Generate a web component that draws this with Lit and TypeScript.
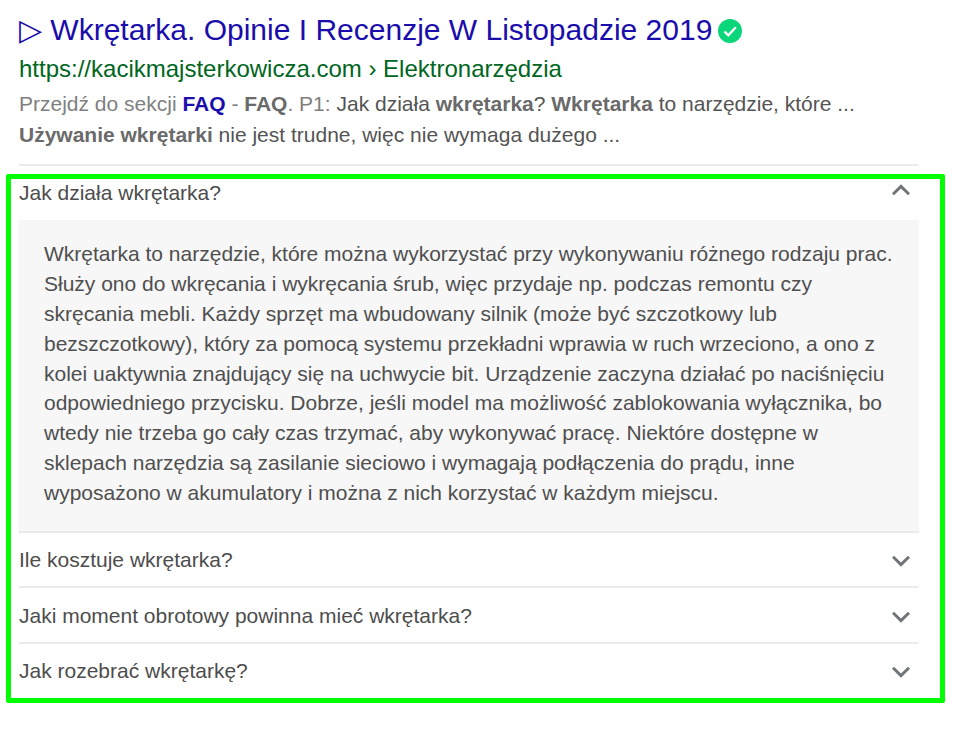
import { LitElement, html, css } from "lit";
import { customElement } from "lit/decorators.js";

const chev = (up: boolean) => html`<svg class="chev" viewBox="0 0 20 12" width="20" height="12"><path d=${up ? "M2 10.2 10 2.4l8 7.8" : "M2 1.8 10 9.6l8-7.8"} fill="none" stroke="#70757a" stroke-width="3"/></svg>`;

@customElement("app-root")
export class AppRoot extends LitElement {
  static styles = css`
    :host { display: block; position: relative; width: 964px; height: 731px; background: #fff; font-family: "Liberation Sans", Arial, sans-serif; overflow: hidden; }
    .wrap { width: 900px; margin-left: 19px; padding-top: 10px; display: flex; flex-direction: column; }
    .title { display: flex; align-items: center; gap: 6px; height: 38px; font-size: 30px; color: #1a0dab; white-space: nowrap; }
    .badge { margin-top: 4px; }
    .url { font-size: 24px; line-height: 24px; margin-top: 9px; color: #006621; white-space: nowrap; }
    .snippet { font-size: 21px; line-height: 31px; margin-top: 7px; color: #545454; }
    .snippet b.g { color: #6a6a6a; }
    .snippet b.b { color: #1a0dab; }
    .snippet .m { color: #808080; }
    .first { border-top: 2px solid #ebebeb; margin-top: 14px; }
    .row { display: flex; justify-content: space-between; align-items: center; font-size: 21px; color: #4d4d4d; height: 55.5px; box-sizing: border-box; padding: 2px 8px 0 0; border-top: 2px solid #ebebeb; }
    .row .chev { margin-top: 2px; }
    .row.open { border-top: 0; height: 54px; padding: 0 8px 1px 0; }
    .row.open .chev { margin: 0 0 6px; }
    .panel { background: #f7f7f7; padding: 19px 24px 0 25px; font-size: 21px; line-height: 29.875px; color: #4f4f4f; height: 310.7px; box-sizing: border-box; }
    .frame { position: absolute; left: 6px; top: 174px; width: 939px; height: 529px; box-sizing: border-box; border: 5px solid #00ff00; border-radius: 2px; pointer-events: none; }
  `;
  render() {
    return html`
      <div class="wrap">
        <div class="title"><span>▷ Wkrętarka. Opinie I Recenzje W Listopadzie 2019</span>
          <svg class="badge" width="24" height="24" viewBox="0 0 24 24"><circle cx="12" cy="12" r="12" fill="#0bd67a"/><path d="M6.5 12.5l3.8 3.8 7.5-8" fill="none" stroke="#fff" stroke-width="2.4"/></svg>
        </div>
        <div class="url">https://kacikmajsterkowicza.com › Elektronarzędzia</div>
        <div class="snippet"><span class="m">Przejdź do sekcji</span> <b class="b">FAQ</b> <span class="m">-</span> <b class="g">FAQ</b><span class="m">. P1:</span> Jak działa <b class="g">wkrętarka</b>? <b class="g">Wkrętarka</b> to narzędzie, które ...<br><b class="g">Używanie wkrętarki</b> nie jest trudne, więc nie wymaga dużego ...</div>
        <div class="first"></div>
        <div class="row open"><span>Jak działa wkrętarka?</span>${chev(true)}</div>
        <div class="panel">Wkrętarka to narzędzie, które można wykorzystać przy wykonywaniu różnego rodzaju prac. Służy ono do wkręcania i wykręcania śrub, więc przydaje np. podczas remontu czy skręcania mebli. Każdy sprzęt ma wbudowany silnik (może być szczotkowy lub bezszczotkowy), który za pomocą systemu przekładni wprawia w ruch wrzeciono, a ono z kolei uaktywnia znajdujący się na uchwycie bit. Urządzenie zaczyna działać po naciśnięciu odpowiedniego przycisku. Dobrze, jeśli model ma możliwość zablokowania wyłącznika, bo wtedy nie trzeba go cały czas trzymać, aby wykonywać pracę. Niektóre dostępne w sklepach narzędzia są zasilanie sieciowo i wymagają podłączenia do prądu, inne wyposażono w akumulatory i można z nich korzystać w każdym miejscu.</div>
        <div class="row"><span>Ile kosztuje wkrętarka?</span>${chev(false)}</div>
        <div class="row"><span>Jaki moment obrotowy powinna mieć wkrętarka?</span>${chev(false)}</div>
        <div class="row"><span>Jak rozebrać wkrętarkę?</span>${chev(false)}</div>
      </div>
      <div class="frame"></div>
    `;
  }
}
